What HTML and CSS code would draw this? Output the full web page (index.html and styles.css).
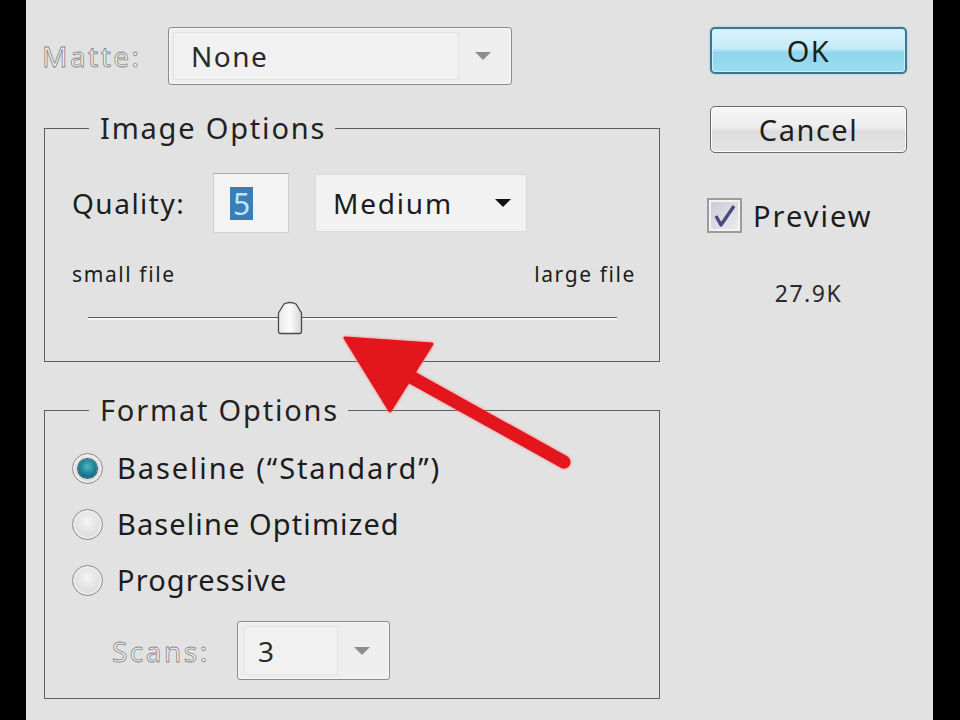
FILE: index.html
```html
<!DOCTYPE html>
<html>
<head>
<meta charset="utf-8">
<link rel="stylesheet" href="styles.css">
</head>
<body>
<div class="screen">
  <div class="dialog">
    <div class="main">
      <div class="matte-row">
        <span class="label disabled matte-label">Matte:</span>
        <div class="combo combo-matte">
          <span class="combo-value">None</span>
          <span class="combo-btn"><span class="tri tri-gray"></span></span>
        </div>
      </div>

      <fieldset class="group group-image">
        <legend>Image Options</legend>
        <div class="quality-row">
          <span class="label quality-label">Quality:</span>
          <div class="num-input"><span class="selected-text">5</span></div>
          <div class="dropdown"><span class="dropdown-value">Medium</span><span class="tri tri-black"></span></div>
        </div>
        <div class="scale-labels"><span>small file</span><span>large file</span></div>
        <div class="slider">
          <div class="track"></div>
          <svg class="thumb" style="left: 35.8%" width="26" height="34" viewBox="0 0 26 34">
            <defs>
              <linearGradient id="tg" x1="0" y1="0" x2="1" y2="0">
                <stop offset="0" stop-color="#e9e9e9"/>
                <stop offset="0.5" stop-color="#fbfbfb"/>
                <stop offset="1" stop-color="#d6d6d6"/>
              </linearGradient>
            </defs>
            <path d="M1.5 12 L7 3 Q13 0 19 3 L24.5 12 V30.5 Q24.5 32.5 22.5 32.5 H3.5 Q1.5 32.5 1.5 30.5 Z" fill="url(#tg)" stroke="#4a4a4a" stroke-width="1.3"/>
          </svg>
        </div>
      </fieldset>

      <fieldset class="group group-format">
        <legend>Format Options</legend>
        <div class="radio-row"><span class="radio radio-on"><span class="dot"></span></span><span class="radio-label radio-label-wide">Baseline (“Standard”)</span></div>
        <div class="radio-row"><span class="radio"></span><span class="radio-label">Baseline Optimized</span></div>
        <div class="radio-row"><span class="radio"></span><span class="radio-label">Progressive</span></div>
        <div class="scans-row">
          <span class="label disabled scans-label">Scans:</span>
          <div class="combo combo-scans">
            <span class="combo-value">3</span>
            <span class="combo-btn"><span class="tri tri-gray"></span></span>
          </div>
        </div>
      </fieldset>
    </div>

    <div class="side">
      <div class="btn btn-ok">OK</div>
      <div class="btn btn-cancel">Cancel</div>
      <div class="check-row">
        <span class="checkbox">
          <svg width="24" height="24" viewBox="0 0 24 24"><path d="M3 12 L8 21 L21 2" fill="none" stroke="#4b4a7e" stroke-width="3.4" stroke-linejoin="round"/></svg>
        </span>
        <span class="check-label">Preview</span>
      </div>
      <div class="size">27.9K</div>
    </div>
  </div>

  <svg class="arrow" width="960" height="720" viewBox="0 0 960 720">
    <line x1="402" y1="372" x2="564" y2="462" stroke="#e2161c" stroke-width="13" stroke-linecap="round"/>
    <polygon points="345,338 432,344 390,411" fill="#e2161c" stroke="#e2161c" stroke-width="3" stroke-linejoin="round"/>
  </svg>
</div>
</body>
</html>
```

FILE: styles.css
```css
* { box-sizing: border-box; }

html, body {
  margin: 0;
  padding: 0;
  background: #000;
}

.screen {
  position: relative;
  width: 960px;
  height: 720px;
  background: #000;
  overflow: hidden;
  font-family: "Noto Sans", "Open Sans", sans-serif;
  color: #1c1c1c;
  letter-spacing: 1.5px;
}

.dialog {
  margin-left: 26px;
  width: 907px;
  height: 720px;
  background: #e2e2e2;
  display: flex;
  padding: 27px 26px 0 18px;
  gap: 50px;
}

.main {
  width: 616px;
  display: flex;
  flex-direction: column;
}

.label {
  font-size: 28px;
  line-height: 36px;
}

.disabled {
  color: #f2f2f2;
  -webkit-text-stroke: 0.8px #858585;
  letter-spacing: 2.5px;
}

.matte-row {
  height: 58px;
  display: flex;
  align-items: center;
}

.matte-label {
  margin-left: -2px;
  width: 126px;
}

.combo {
  display: flex;
  border: 1px solid #8a8a8a;
  border-radius: 3px;
  background: #eeeeee;
  padding: 4px;
  box-shadow: inset 0 0 0 1px #f7f7f7;
}

.combo-value {
  flex: 1;
  background: #f1f1f1;
  border: 1px solid #e2e2e2;
  font-size: 28px;
  line-height: 46px;
  padding-left: 17px;
  color: #2a2a2a;
}

.combo-btn {
  display: flex;
  align-items: center;
  justify-content: center;
}

.combo-matte {
  width: 344px;
  height: 58px;
}
.combo-matte .combo-btn { width: 48px; }

.tri {
  width: 0;
  height: 0;
  border-left: 8px solid transparent;
  border-right: 8px solid transparent;
}
.tri-gray { border-top: 8px solid #8d8d8d; }
.tri-black { border-top: 8px solid #111; }

.group {
  margin: 0;
  width: 616px;
  border: 1px solid #5e5e5e;
  padding: 0 23px 0 27px;
}

.group legend {
  margin-left: 17px;
  padding: 0 9px 0 11px;
  font-size: 29px;
  line-height: 40px;
  color: #222;
  letter-spacing: 1.8px;
}

.group-image {
  margin-top: 23px;
  padding-top: 24px;
  padding-bottom: 26px;
}

.quality-row {
  display: flex;
  align-items: center;
  height: 62px;
}

.quality-label { width: 141px; }

.num-input {
  width: 76px;
  height: 60px;
  background: #f3f3f3;
  border: 1px solid #d0d0d0;
  border-top-color: #a9a9a9;
  padding: 13px 0 0 16px;
}

.selected-text {
  display: inline-block;
  background: #3b7db5;
  color: #bfe6ff;
  font-size: 30px;
  line-height: 33px;
  padding: 0 1px 0 3px;
}

.dropdown {
  margin-left: 26px;
  width: 212px;
  height: 58px;
  background: #f2f2f2;
  border: 1px solid #dadada;
  display: flex;
  align-items: center;
  justify-content: space-between;
  padding: 0 15px 0 17px;
}

.dropdown-value {
  font-size: 28px;
  line-height: 36px;
  letter-spacing: 1.8px;
}

.scale-labels {
  margin-top: 27px;
  display: flex;
  justify-content: space-between;
  font-size: 21px;
  line-height: 26px;
  letter-spacing: 1.6px;
}

.slider {
  position: relative;
  margin: 14px 19px 0 16px;
  height: 34px;
}

.track {
  position: absolute;
  left: 0;
  right: 0;
  top: 16px;
  height: 3px;
  border-top: 1px solid #5a5a5a;
  border-bottom: 2px solid #f6f6f6;
}

.thumb {
  position: absolute;
  top: 0;
}

.group-format {
  margin-top: 28px;
  padding-top: 10px;
  padding-bottom: 18px;
}

.radio-row {
  height: 56px;
  display: flex;
  align-items: center;
}

.radio {
  width: 31px;
  height: 31px;
  border-radius: 50%;
  border: 1px solid #8c8c8c;
  background: radial-gradient(circle at 50% 40%, #f4f4f4 0%, #d9d9d9 75%, #cfcfcf 100%);
  box-shadow: inset 0 0 0 2px #ececec;
  display: flex;
  align-items: center;
  justify-content: center;
}

.radio-on .dot {
  width: 19px;
  height: 19px;
  border-radius: 50%;
  background: radial-gradient(circle at 50% 40%, #4fb6c4 0%, #1c7c93 55%, #0d4f6a 100%);
  box-shadow: 0 0 0 1px #2b5d74;
}

.radio-label {
  margin-left: 14px;
  font-size: 29px;
  line-height: 36px;
  letter-spacing: 1.1px;
}

.radio-label-wide { letter-spacing: 1.9px; }

.scans-row {
  margin-top: 13px;
  display: flex;
  align-items: center;
  padding-left: 40px;
}

.scans-label { width: 125px; }

.combo-scans {
  width: 153px;
  height: 59px;
  padding: 4px 4px 4px 6px;
}
.combo-scans .combo-value {
  flex: 0 0 94px;
  padding-left: 13px;
  line-height: 48px;
}
.combo-scans .combo-btn { flex: 1; }

.side {
  width: 197px;
  display: flex;
  flex-direction: column;
}

.btn {
  height: 47px;
  border-radius: 5px;
  text-align: center;
  font-size: 29px;
  line-height: 44px;
  color: #1e1e1e;
}

.btn-ok {
  border: 2px solid #3b7890;
  background: linear-gradient(to bottom, #d7f3fc 0%, #c4ecf9 45%, #8fd6ee 55%, #9ddcf1 100%);
  box-shadow: inset 0 0 0 1px #c8f2ff, 0 0 2px #7fc3dc;
}

.btn-cancel {
  margin-top: 32px;
  border: 1px solid #6a6a6a;
  background: linear-gradient(to bottom, #f6f6f6 0%, #ededed 45%, #dcdcdc 55%, #e4e4e4 100%);
  box-shadow: inset 0 0 0 1px #fafafa;
  line-height: 45px;
}

.check-row {
  margin-top: 45px;
  margin-left: -3px;
  display: flex;
  align-items: center;
  height: 35px;
}

.checkbox {
  width: 35px;
  height: 35px;
  border: 2px solid #9b9b9b;
  background: linear-gradient(135deg, #c9c9d6, #ededf2);
  box-shadow: inset 0 0 0 2px #f2f2f2;
  display: flex;
  align-items: center;
  justify-content: center;
}

.check-label {
  margin-left: 11px;
  font-size: 29px;
  line-height: 36px;
  letter-spacing: 2px;
}

.size {
  margin-top: 45px;
  text-align: center;
  font-size: 23px;
  line-height: 30px;
  color: #2a2a2a;
  letter-spacing: 1.5px;
}

.arrow {
  position: absolute;
  left: 0;
  top: 0;
  pointer-events: none;
  filter: drop-shadow(0 0 1.5px #ff7a7a);
}
```
